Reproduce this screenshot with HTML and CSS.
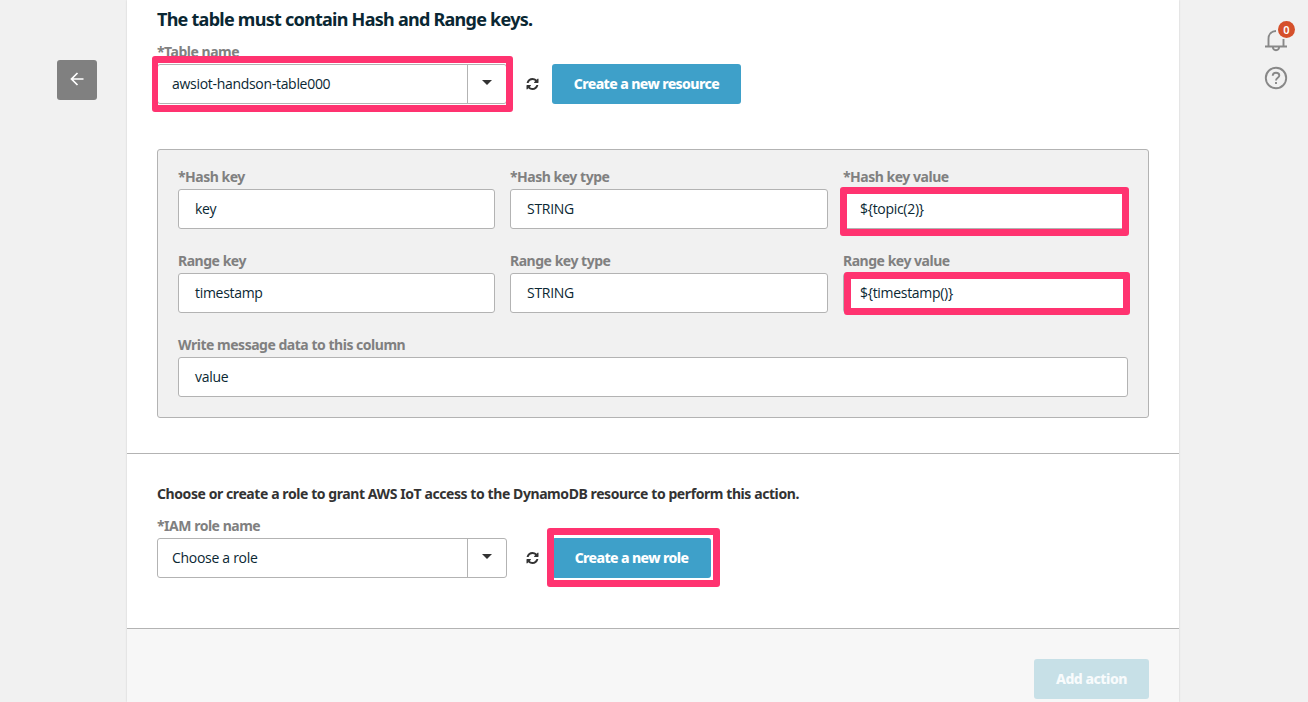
FILE: index.html
```html
<!DOCTYPE html>
<html lang="en">
<head>
<meta charset="utf-8">
<title>Configure action</title>
<link rel="stylesheet" href="styles.css">
</head>
<body>
<svg class="defs" width="0" height="0">
  <symbol id="refresh" viewBox="0 0 1536 1536">
    <path d="M1511 928q0 5-1 7-64 268-268 434.500T764 1536q-146 0-282.500-55T238 1324l-129 129q-19 19-45 19t-45-19-19-45V960q0-26 19-45t45-19h448q26 0 45 19t19 45-19 45l-137 137q71 66 161 102t187 36q134 0 250-65t186-179q11-17 53-117 8-23 30-23h192q13 0 22.500 9.500t9.500 22.500zM1536 128v448q0 26-19 45t-45 19h-448q-26 0-45-19t-19-45 19-45l138-138Q969 256 768 256q-134 0-250 65T332 500q-11 17-53 117-8 23-30 23H50q-13 0-22.500-9.500T18 608v-7q65-268 270-434.500T768 0q146 0 284 55.500T1297 212l130-129q19-19 45-19t45 19 19 45z"/>
  </symbol>
</svg>
<div class="layout">
  <aside class="left-rail">
    <button class="back" aria-label="Back">
      <svg width="14" height="14" viewBox="0 0 14 14"><path d="M13.500 7H1.500M7.500 1L1.500 7L7.500 13"/></svg>
    </button>
  </aside>
  <main class="content">
    <section class="table-section">
      <h2 class="title">The table must contain Hash and Range keys.</h2>
      <label class="label">*Table name</label>
      <div class="control-row">
        <div class="select"><span class="select-text">awsiot-handson-table000</span><span class="select-toggle"><i class="caret"></i></span></div>
        <svg class="refresh"><use href="#refresh"/></svg>
        <button class="button button-resource">Create a new resource</button>
        <div class="mark mark-table"></div>
      </div>
      <div class="panel">
        <div class="fields">
          <div class="field"><label class="label">*Hash key</label><div class="input">key</div></div>
          <div class="field"><label class="label">*Hash key type</label><div class="input">STRING</div></div>
          <div class="field"><label class="label">*Hash key value</label><div class="input">${topic(2)}</div><div class="mark mark-hash"></div></div>
          <div class="field"><label class="label">Range key</label><div class="input">timestamp</div></div>
          <div class="field"><label class="label">Range key type</label><div class="input">STRING</div></div>
          <div class="field"><label class="label">Range key value</label><div class="input">${timestamp()}</div><div class="mark mark-range"></div></div>
          <div class="field field-wide"><label class="label">Write message data to this column</label><div class="input">value</div></div>
        </div>
      </div>
    </section>
    <section class="role-section">
      <p class="note">Choose or create a role to grant AWS IoT access to the DynamoDB resource to perform this action.</p>
      <label class="label">*IAM role name</label>
      <div class="control-row">
        <div class="select"><span class="select-text">Choose a role</span><span class="select-toggle"><i class="caret"></i></span></div>
        <svg class="refresh"><use href="#refresh"/></svg>
        <button class="button button-role">Create a new role</button>
        <div class="mark mark-role"></div>
      </div>
    </section>
    <footer class="footer"><button class="button button-add" disabled>Add action</button></footer>
  </main>
  <aside class="right-rail">
    <div class="bell">
      <svg width="24" height="24" viewBox="0 0 24 24"><path d="M1 18.500H23M4.500 18V11C4.500 6.500 7.200 3.200 12 3M19.500 11V18M8.800 19C9 21.300 10.200 22.200 12 22.200S15 21.300 15.200 19"/></svg>
      <span class="badge">0</span>
    </div>
    <svg class="help" width="24" height="24" viewBox="0 0 24 24"><circle cx="12" cy="12" r="10.200"/><path d="M8.700 9.800C8.800 7.600 10.100 6.700 12 6.700S15.300 7.700 15.300 9.500C15.300 11.700 12 11.800 12 14.400M12 16V18"/></svg>
  </aside>
</div>
</body>
</html>
```
FILE: styles.css
```css
* { box-sizing: border-box; }
body {
  margin: 0;
  height: 702px;
  overflow: hidden;
  background: #f1f1f1;
  color: #16191f;
  font-family: "Noto Sans", "Open Sans", sans-serif;
  font-size: 14px;
}
.defs { position: absolute; }
.layout { display: grid; grid-template-columns: 127px 1052px 129px; height: 702px; }
.left-rail { padding: 60px 0 0 57px; }
.back {
  display: flex;
  align-items: center;
  justify-content: center;
  width: 40px;
  height: 40px;
  padding: 0 0 2px;
  border: 0;
  border-radius: 3px;
  background: #808080;
}
.back svg { fill: none; stroke: #fff; stroke-width: 1.7; }
.content {
  display: flex;
  flex-direction: column;
  background: #fff;
  box-shadow: 0 0 2px rgba(0, 0, 0, 0.15);
}
.table-section { height: 454px; padding: 7px 30px 0; border-bottom: 1px solid #b3b3b3; }
.title {
  margin: 0 0 12px;
  color: #0a2733;
  font-size: 18px;
  font-weight: 700;
  line-height: 24px;
  letter-spacing: -0.74px;
  white-space: nowrap;
}
.label {
  display: block;
  height: 21px;
  color: #808080;
  font-size: 14px;
  font-weight: 700;
  line-height: 18px;
  letter-spacing: -0.48px;
  white-space: nowrap;
}
.control-row { position: relative; display: flex; align-items: center; height: 40px; }
.select {
  display: flex;
  width: 350px;
  height: 40px;
  border: 1px solid #b3b3b3;
  border-radius: 3px;
}
.select-text { flex: 1; padding-left: 14px; }
.select-text, .input {
  color: #0a2733;
  font-family: "Open Sans", "Noto Sans", sans-serif;
  font-size: 14px;
  font-weight: 400;
  line-height: 38px;
  letter-spacing: -0.3px;
  white-space: nowrap;
}
.select-toggle { width: 39px; padding: 15px 0 0 14px; border-left: 1px solid #b3b3b3; }
.caret {
  display: block;
  width: 0;
  height: 0;
  border: 5px solid transparent;
  border-top: 5px solid #333;
  border-bottom: 0;
}
.refresh { width: 13px; height: 12px; margin: 0 13px 0 19px; fill: #333; }
.button {
  height: 40px;
  padding: 0;
  border: 0;
  border-radius: 3px;
  background: #3ea0c9;
  color: #fff;
  font: 800 14px/40px "Noto Sans", sans-serif;
  letter-spacing: -0.6px;
  white-space: nowrap;
}
.button-resource { width: 189px; }
.button-role { width: 159px; }
.button-add { width: 115px; background: #c7e0e7; color: #f8fbfc; letter-spacing: -0.5px; }
.panel {
  height: 269px;
  margin-top: 45px;
  padding: 18px 20px 0;
  border: 1px solid #b3b3b3;
  border-radius: 3px;
  background: #f1f1f1;
}
.fields { display: grid; grid-template-columns: 317px 318px 285px; column-gap: 15px; row-gap: 23px; }
.field { position: relative; }
.field-wide { grid-column: 1 / -1; }
.input {
  height: 40px;
  padding-left: 16px;
  border: 1px solid #b3b3b3;
  border-radius: 3px;
  background: #fff;
}
.role-section { height: 175px; padding: 31px 30px 0; border-bottom: 1px solid #b3b3b3; }
.note { margin: 0 0 14px; color: #333; font-weight: 700; line-height: 18px; letter-spacing: -0.42px; white-space: nowrap; }
.footer { display: flex; flex: 1; justify-content: flex-end; padding: 30px 30px 0; background: #f7f7f7; }
.mark { position: absolute; border: 7px solid #ff3370; border-radius: 3px; }
.mark-table { left: -5px; top: -8px; width: 361px; height: 56px; border-left-width: 6px; }
.mark-hash { left: -3px; top: 19px; width: 289px; height: 49px; }
.mark-range { left: 1px; top: 20px; width: 286px; height: 43px; }
.mark-role { left: 390px; top: -10px; width: 173px; height: 59px; }
.right-rail { display: flex; flex-direction: column; padding: 28px 0 0 85px; }
.bell { position: relative; width: 24px; height: 24px; margin-bottom: 14px; }
.bell svg, .help { display: block; fill: none; stroke: #888; stroke-width: 1.9; }
.badge {
  position: absolute;
  left: 14px;
  top: -7px;
  width: 17px;
  height: 17px;
  border-radius: 50%;
  background: #d5502b;
  color: #fff;
  font-size: 11px;
  font-weight: 600;
  line-height: 17px;
  text-align: center;
}
```
